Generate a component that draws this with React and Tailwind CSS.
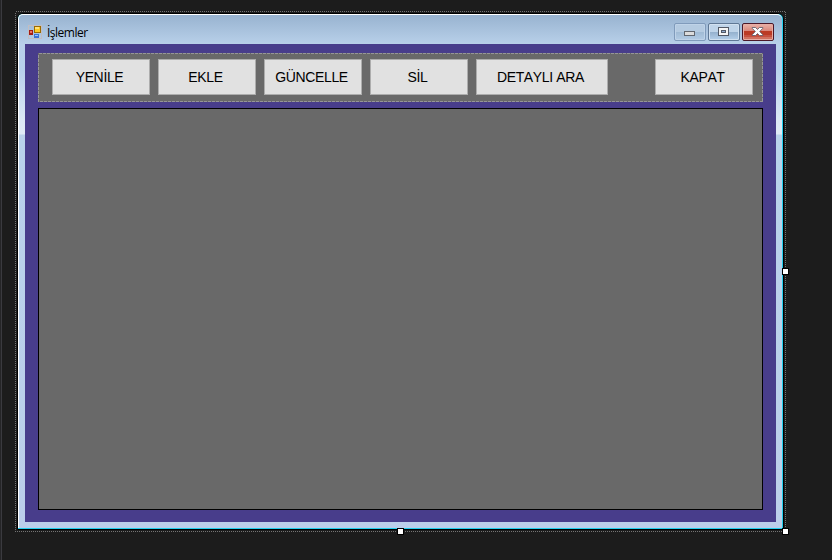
const actions = [
  { label: "YENİLE", width: "w-[98px]" },
  { label: "EKLE", width: "w-[98px]" },
  { label: "GÜNCELLE", width: "w-[98px]" },
  { label: "SİL", width: "w-[98px]" },
  { label: "DETAYLI ARA", width: "w-[132px]" },
];

function FormIcon() {
  return (
    <svg className="h-[14px] w-[14px]" viewBox="0 0 14 14" shapeRendering="crispEdges">
      <rect x=".5" y=".5" width="13" height="13" fill="none" stroke="#c2bec1" />
      <rect x="6" y="1" width="7" height="7" fill="#9b6b00" />
      <rect x="7" y="2" width="5" height="5" fill="#fbc824" />
      <rect x="7" y="2" width="4" height="2" fill="#ffe27a" />
      <rect x="1" y="5" width="4" height="5" fill="#a31c12" />
      <rect x="2" y="6" width="2" height="2" fill="#f0705c" />
      <rect x="6" y="9" width="5" height="4" fill="#3c73d2" />
      <rect x="7" y="10" width="3" height="1" fill="#9cc3fa" />
    </svg>
  );
}

function ActionButton({ label, width }) {
  return (
    <button
      className={`h-[36px] ${width} shrink-0 border border-[#adadad] bg-[#e1e1e1] pr-[3px] pb-px text-center font-['Liberation_Sans',sans-serif] text-[14px] leading-[14px] tracking-[-0.35px] whitespace-nowrap text-black [font-kerning:none]`}
    >
      {label}
    </button>
  );
}

function WindowControls() {
  return (
    <div className="flex gap-[2px]">
      <button className="h-[18px] w-8 rounded-[2px] border border-[#809bbb] bg-linear-to-b from-[#b5cbe1] from-50% via-[#9fbad4] via-50% to-[#b3cce5] shadow-[inset_0_0_0_1px_#bfd3e8]">
        <svg className="block h-4 w-[30px]" viewBox="0 0 30 16" shapeRendering="crispEdges">
          <rect x="9.5" y="7.5" width="10" height="4" fill="#dcdcdc" stroke="#62676f" />
        </svg>
      </button>
      <button className="h-[18px] w-8 rounded-[2px] border border-[#5f7895] bg-linear-to-b from-[#bfd4e9] from-50% via-[#94b0cd] via-50% to-[#b5d0ea] shadow-[inset_0_0_0_1px_#d2e1f0]">
        <svg className="block h-4 w-[30px]" viewBox="0 0 30 16" shapeRendering="crispEdges">
          <rect x="9.5" y="3.5" width="10" height="8" fill="#f5f5f5" stroke="#525966" />
          <rect x="12.5" y="6.5" width="4" height="2" fill="#91acd0" stroke="#525966" />
        </svg>
      </button>
      <button className="h-[18px] w-8 rounded-[2px] border border-[#4b1828] bg-linear-to-b from-[#e9b3aa] from-[0%] via-[#d98579] via-45% to-[#d98579] shadow-[inset_0_0_0_1px_#e7ada4]">
        <svg className="block h-4 w-[30px]" viewBox="0 0 30 16">
          <rect x="1" y="7" width="28" height="4" fill="#bb3b25" />
          <rect x="1" y="11" width="28" height="2" fill="#c65140" />
          <rect x="1" y="13" width="28" height="2" fill="#d1715f" />
          <path
            d="M9.200 3.500h3.400l1.900 2 1.900-2h3.400v.8L16.700 7.500l3.100 3.200v.8h-3.400l-1.900-2-1.900 2H9.200v-.8l3.100-3.200-3.100-3.200z"
            fill="#fff"
            stroke="#535765"
            strokeWidth=".8"
          />
        </svg>
      </button>
    </div>
  );
}

function Handle({ place }) {
  return <span className={`absolute h-[7px] w-[7px] border border-black bg-white ${place}`} />;
}

export default function App() {
  return (
    <main className="h-[560px] w-[832px] overflow-hidden border-l border-[#252527] bg-[#1c1c1c] pt-[11px] pl-[14px] shadow-[inset_1px_0_0_#3a3a3f]">
      <section className="relative h-[521px] w-[771px] p-[2px]">
        <svg className="absolute inset-0 h-[521px] w-[771px]" shapeRendering="crispEdges">
          <rect x=".5" y=".5" width="770" height="520" fill="none" stroke="#747474" strokeDasharray="1 1" />
        </svg>
        <div className="relative h-[517px] w-[767px] rounded-t-[6px] border border-black bg-[#22cfee]">
          <div className="flex h-[514px] w-[764px] flex-col rounded-t-[5px] border-t border-l border-white bg-[linear-gradient(#98b3d0_0px,#b8d0e9_29px,#b8d1ec_55px,#dce8f5_105px,#e0ebf6_119px,#b9d2eb_120px,#bccfea_100%)] pl-[6px]">
            <header className="flex h-[29px] w-[751px] shrink-0 items-start justify-between pt-2 pr-[2px] pl-[3px]">
              <div className="flex pt-[2px]">
                <FormIcon />
                <h1 className="ml-[5px] pt-px font-['Open_Sans',sans-serif] text-[12px] leading-[14px] font-normal tracking-[-0.5px] text-black">İşlemler</h1>
              </div>
              <WindowControls />
            </header>
            <div className="flex h-[478px] w-[751px] flex-col gap-[6px] bg-[#483d8b] pt-[9px] pl-[13px]">
              <div className="relative flex h-[49px] w-[725px] items-start justify-between bg-[#696969] pt-[6px] pr-[10px] pl-[14px]">
                <svg className="pointer-events-none absolute inset-0 h-[49px] w-[725px]" shapeRendering="crispEdges">
                  <rect x=".5" y=".5" width="724" height="48" fill="none" stroke="#969696" strokeDasharray="3 1" />
                </svg>
                <div className="flex gap-2">
                  {actions.map((a) => (
                    <ActionButton key={a.label} {...a} />
                  ))}
                </div>
                <ActionButton label="KAPAT" width="w-[98px]" />
              </div>
              <div className="h-[402px] w-[725px] border border-black bg-[#696969]" />
            </div>
          </div>
        </div>
        <Handle place="top-[257px] left-[767px]" />
        <Handle place="top-[517px] left-[382px]" />
        <Handle place="top-[517px] left-[767px]" />
      </section>
    </main>
  );
}
